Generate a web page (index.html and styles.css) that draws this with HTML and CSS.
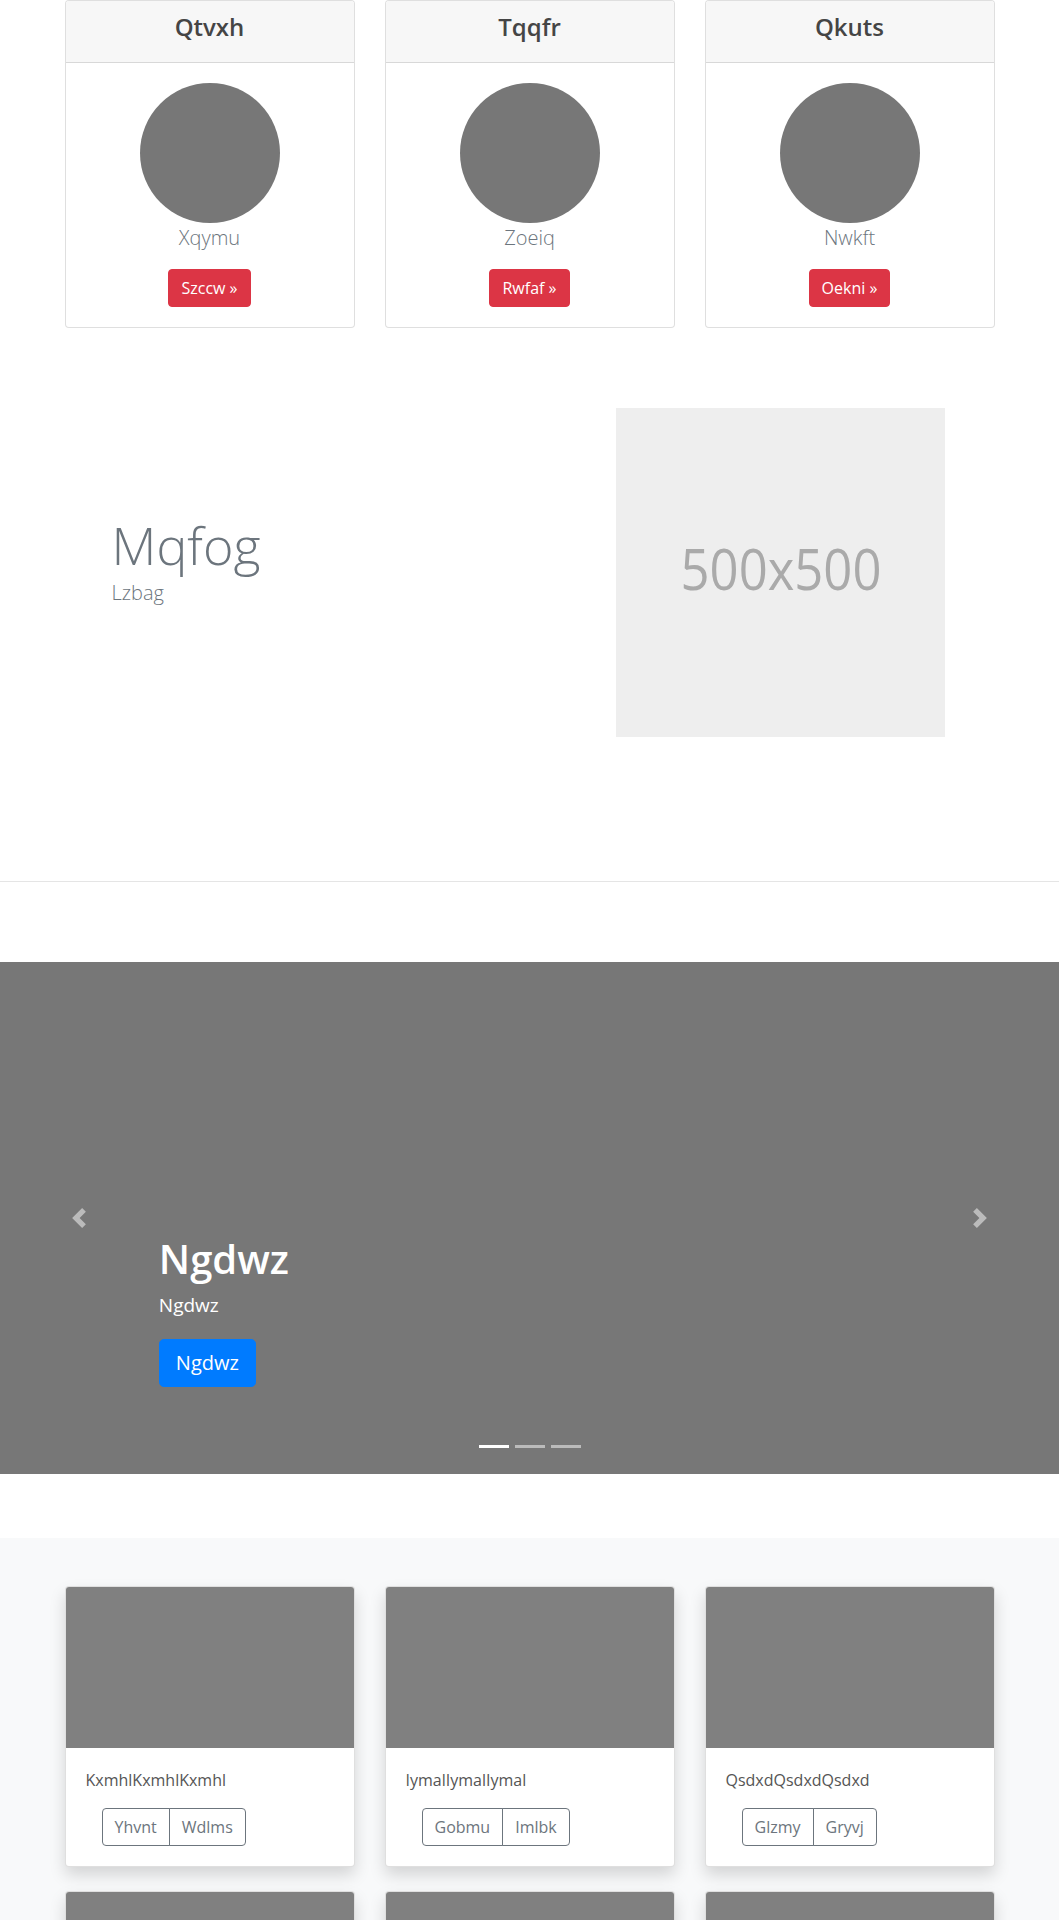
FILE: index.html
```html
<!DOCTYPE html>
<html lang="en">
<head>
<meta charset="utf-8">
<title>Page</title>
<link rel="stylesheet" href="styles.css">
</head>
<body>
<div class="container">
  <div class="grid3">
    <div class="card">
      <div class="card-header"><h4>Qtvxh</h4></div>
      <div class="card-body pbody">
        <div class="avatar"></div>
        <p class="lead">Xqymu</p>
        <a class="btn btn-danger" href="#">Szccw »</a>
      </div>
    </div>
    <div class="card">
      <div class="card-header"><h4>Tqqfr</h4></div>
      <div class="card-body pbody">
        <div class="avatar"></div>
        <p class="lead">Zoeiq</p>
        <a class="btn btn-danger" href="#">Rwfaf »</a>
      </div>
    </div>
    <div class="card">
      <div class="card-header"><h4>Qkuts</h4></div>
      <div class="card-body pbody">
        <div class="avatar"></div>
        <p class="lead">Nwkft</p>
        <a class="btn btn-danger" href="#">Oekni »</a>
      </div>
    </div>
  </div>

  <div class="feature">
    <div class="feature-text">
      <h1 class="display">Mqfog</h1>
      <p class="lead flat">Lzbag</p>
    </div>
    <div class="feature-img">
      <svg class="ph" width="329" height="329" viewBox="0 0 329 329" xmlns="http://www.w3.org/2000/svg">
        <rect width="329" height="329" fill="#eeeeee"/>
        <text x="165" y="182" fill="#aaaaaa" font-size="57" text-anchor="middle" font-family="Open Sans, sans-serif" textLength="201" lengthAdjust="spacingAndGlyphs">500x500</text>
      </svg>
    </div>
  </div>
</div>

<hr class="divider">

<div class="carousel">
  <div class="caption">
    <h1>Ngdwz</h1>
    <p class="sub">Ngdwz</p>
    <p class="flat"><a class="btn btn-lg btn-primary" href="#">Ngdwz</a></p>
  </div>
  <a class="ctrl ctrl-prev" href="#">
    <svg width="20" height="20" viewBox="0 0 8 8" xmlns="http://www.w3.org/2000/svg"><path fill="#fff" d="M5.25 0l-4 4 4 4 1.5-1.5L4.25 4l2.5-2.5L5.25 0z"/></svg>
  </a>
  <a class="ctrl ctrl-next" href="#">
    <svg width="20" height="20" viewBox="0 0 8 8" xmlns="http://www.w3.org/2000/svg"><path fill="#fff" d="M2.75 0l-1.5 1.5L3.75 4l-2.5 2.5L2.75 8l4-4-4-4z"/></svg>
  </a>
  <ol class="indicators">
    <li class="active"></li>
    <li></li>
    <li></li>
  </ol>
</div>

<section class="album">
  <div class="container">
    <div class="grid3">
      <div class="card acard">
        <div class="thumb"></div>
        <div class="card-body">
          <p class="card-text">KxmhlKxmhlKxmhl</p>
          <div class="btn-group">
            <a class="btn btn-outline" href="#">Yhvnt</a>
            <a class="btn btn-outline" href="#">Wdlms</a>
          </div>
        </div>
      </div>
      <div class="card acard">
        <div class="thumb"></div>
        <div class="card-body">
          <p class="card-text">IymalIymalIymal</p>
          <div class="btn-group">
            <a class="btn btn-outline" href="#">Gobmu</a>
            <a class="btn btn-outline" href="#">Imlbk</a>
          </div>
        </div>
      </div>
      <div class="card acard">
        <div class="thumb"></div>
        <div class="card-body">
          <p class="card-text">QsdxdQsdxdQsdxd</p>
          <div class="btn-group">
            <a class="btn btn-outline" href="#">Glzmy</a>
            <a class="btn btn-outline" href="#">Gryvj</a>
          </div>
        </div>
      </div>
      <div class="card acard"><div class="thumb"></div></div>
      <div class="card acard"><div class="thumb"></div></div>
      <div class="card acard"><div class="thumb"></div></div>
    </div>
  </div>
</section>
</body>
</html>
```
FILE: styles.css
```css
* { box-sizing: border-box; }

body {
  margin: 0;
  font-family: "Open Sans", "Noto Sans", sans-serif;
  font-size: 16px;
  line-height: 1.5;
  color: #212529;
  background: #fff;
}

.container {
  width: 960px;
  margin: 0 auto;
  padding: 0 15px;
}

.grid3 {
  display: grid;
  grid-template-columns: repeat(3, 1fr);
  column-gap: 30px;
}

.card {
  background: #fff;
  border: 1px solid rgba(0, 0, 0, 0.125);
  border-radius: 4px;
  overflow: hidden;
  display: flex;
  flex-direction: column;
}

.card-header {
  background: #f7f7f7;
  border-bottom: 1px solid rgba(0, 0, 0, 0.125);
  padding: 12px 20px;
  text-align: center;
}

.card-header h4 {
  margin: 0 0 8px;
  font-size: 24px;
  line-height: 1.2;
  font-weight: 600;
  color: #454545;
}

.card-body { padding: 20px; }

.pbody {
  display: flex;
  flex-direction: column;
  align-items: center;
}

.avatar {
  width: 140px;
  height: 140px;
  border-radius: 50%;
  background: #777;
}

.lead {
  font-size: 20px;
  font-weight: 300;
  line-height: 1.5;
  margin: 0 0 16px;
  color: #6c757d;
}

.flat { margin: 0; }

.btn {
  display: inline-block;
  font-size: 16px;
  line-height: 24px;
  padding: 6px 12px;
  border: 1px solid transparent;
  border-radius: 4px;
  text-decoration: none;
  white-space: nowrap;
}

.btn-danger { background: #dc3545; border-color: #dc3545; color: #fff; }
.btn-primary { background: #007bff; border-color: #007bff; color: #fff; }

.btn-lg {
  font-size: 20px;
  line-height: 30px;
  padding: 8px 16px;
  border-radius: 4.8px;
}

/* feature */
.feature {
  display: grid;
  grid-template-columns: 1fr 1fr;
  column-gap: 30px;
  margin-top: 80px;
}

.feature-text { padding: 106px 0 0 47px; }

.display {
  font-size: 52px;
  font-weight: 300;
  line-height: 1.2;
  margin: 0 0 2px;
  color: #6c757d;
}

.feature-img { padding-left: 71.5px; }

.ph { display: block; }

.divider {
  margin: 144px 0 0;
  border: 0;
  border-top: 1px solid #e5e5e5;
  height: 0;
}

/* carousel */
.carousel {
  position: relative;
  height: 512px;
  margin-top: 80px;
  background: #777;
  overflow: hidden;
}

.caption {
  position: absolute;
  left: 15%;
  right: 15%;
  bottom: 51px;
  padding: 20px 0;
  color: #fff;
  z-index: 2;
}

.caption h1 {
  margin: 0 0 8px;
  font-size: 40px;
  line-height: 1.2;
  font-weight: 600;
}

.caption .sub {
  margin: 0 0 19px;
  font-size: 19px;
  line-height: 1.5;
}

.caption .flat { margin-bottom: 16px; }

.ctrl {
  position: absolute;
  top: 0;
  bottom: 0;
  width: 15%;
  display: flex;
  align-items: center;
  justify-content: center;
  opacity: 0.5;
}

.ctrl-prev { left: 0; }
.ctrl-next { right: 0; }

.indicators {
  position: absolute;
  left: 0;
  right: 0;
  bottom: 0;
  margin: 0 0 16px;
  padding: 0;
  list-style: none;
  display: flex;
  justify-content: center;
}

.indicators li {
  width: 30px;
  height: 3px;
  margin: 0 3px;
  box-sizing: content-box;
  border-top: 10px solid transparent;
  border-bottom: 10px solid transparent;
  background: #fff;
  background-clip: padding-box;
  opacity: 0.5;
}

.indicators li.active { opacity: 1; }

/* album */
.album {
  margin-top: 64px;
  padding: 48px 0;
  background: #f8f9fa;
}

.acard {
  margin-bottom: 24px;
  box-shadow: 0 8px 16px rgba(0, 0, 0, 0.15);
}

.thumb {
  height: 161px;
  background: #808080;
}

.card-text {
  margin: 0 0 16px;
  color: #555;
}

.btn-group {
  display: inline-flex;
  margin-left: 16px;
}

.btn-outline {
  color: #6c757d;
  border-color: #6c757d;
  background: transparent;
}

.btn-group .btn:first-child {
  border-top-right-radius: 0;
  border-bottom-right-radius: 0;
}

.btn-group .btn + .btn {
  margin-left: -1px;
  border-top-left-radius: 0;
  border-bottom-left-radius: 0;
}
```
